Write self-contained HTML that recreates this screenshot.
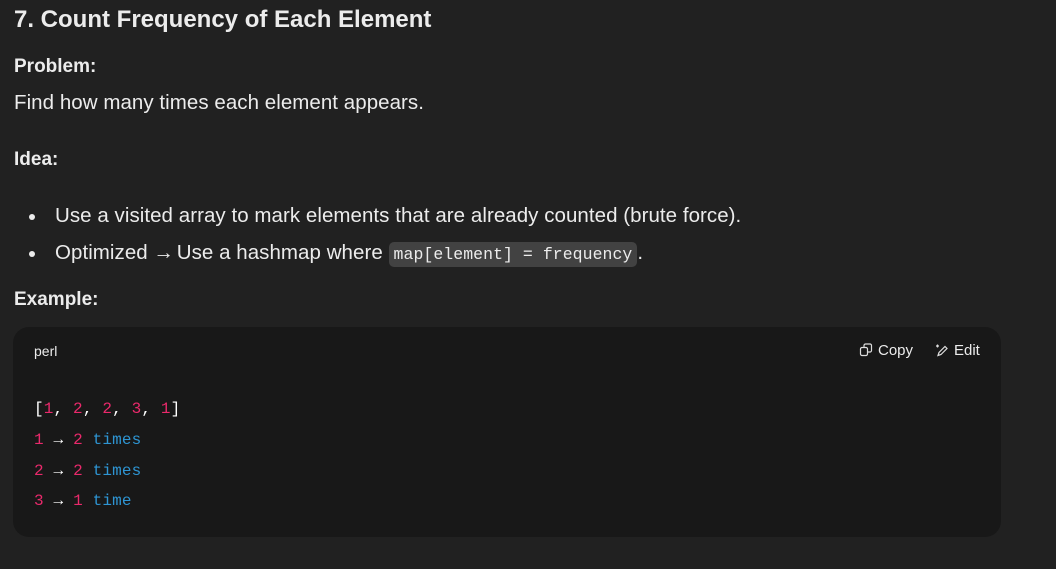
<!DOCTYPE html>
<html><head><style>
body{margin:0;width:1056px;height:569px;background:#212121;color:#ececec;font-family:"Liberation Sans",sans-serif;overflow:hidden;position:relative}
.a{position:absolute;white-space:nowrap}
h1{position:absolute;left:14px;top:6px;margin:0;font-size:24px;font-weight:bold}
.b{font-weight:bold;font-size:19px}
.t{font-size:20.5px;letter-spacing:0.05px}
.dot{position:absolute;width:6px;height:6px;border-radius:50%;background:#ececec}
code{font-family:"Liberation Mono",monospace;font-size:16.5px;background:#424242;border-radius:5px;padding:3px 5px}
.cb{position:absolute;left:13px;top:327px;width:988px;height:210px;background:#181818;border-radius:16px}
.m{font-family:"Liberation Mono",monospace;font-size:16px;letter-spacing:0.15px;position:absolute;left:34px;white-space:pre}
.r{color:#e9296b}.bl{color:#2e95d3}.w{color:#fff}
</style></head><body>
<h1>7. Count Frequency of Each Element</h1>
<div class="a b" style="left:14px;top:56px">Problem:</div>
<div class="a t" style="left:14px;top:91px">Find how many times each element appears.</div>
<div class="a b" style="left:14px;top:149px">Idea:</div>
<div class="dot" style="left:29px;top:214px"></div>
<div class="a t" style="left:55px;top:204px">Use a visited array to mark elements that are already counted (brute force).</div>
<div class="dot" style="left:29px;top:251px"></div>
<div class="a t" style="left:55px;top:241px">Optimized <span style="letter-spacing:-3px">→</span> Use a hashmap where <code>map[element] = frequency</code>.</div>
<div class="a b" style="left:14px;top:289px">Example:</div>
<div class="cb">
<div class="a" style="left:21px;top:16px;font-size:14px;color:#ececec">perl</div>
<div class="a" style="left:846px;top:15px;font-size:15px;color:#ececec"><svg width="14" height="14" viewBox="0 0 14 14" style="vertical-align:-2px;margin-right:5px" fill="none" stroke="#ddd" stroke-width="1.2"><rect x="1.5" y="4.5" width="7" height="8" rx="1.5"/><path d="M5 4.5V2.5a1.5 1.5 0 0 1 1.5-1.5h4.5a1.5 1.5 0 0 1 1.5 1.5v5a1.5 1.5 0 0 1-1.5 1.5H8.5"/></svg>Copy</div>
<div class="a" style="left:922px;top:15px;font-size:15px;color:#ececec"><svg width="14" height="14" viewBox="0 0 14 14" style="vertical-align:-2px;margin-right:5px" fill="none" stroke="#ddd" stroke-width="1.2"><path d="M3 12.5l1-3 6-6 2 2-6 6z M1 3h3 M2.5 1.5v3"/></svg>Edit</div>
</div>
<div class="m w" style="top:400px">[<span class="r">1</span>, <span class="r">2</span>, <span class="r">2</span>, <span class="r">3</span>, <span class="r">1</span>]</div>
<div class="m" style="top:431px"><span class="r">1</span> <span class="w">→</span> <span class="r">2</span> <span class="bl">times</span></div>
<div class="m" style="top:462px"><span class="r">2</span> <span class="w">→</span> <span class="r">2</span> <span class="bl">times</span></div>
<div class="m" style="top:492px"><span class="r">3</span> <span class="w">→</span> <span class="r">1</span> <span class="bl">time</span></div>
</body></html>
